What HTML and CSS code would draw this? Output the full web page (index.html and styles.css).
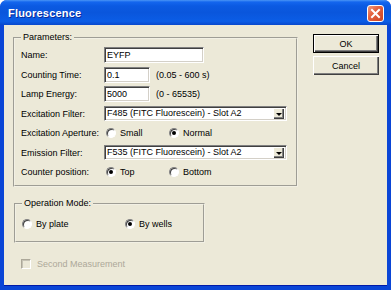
FILE: index.html
```html
<!DOCTYPE html>
<html>
<head>
<meta charset="utf-8">
<link rel="stylesheet" href="styles.css">
</head>
<body>
<div class="window">
  <div class="titlebar">
    <span class="title">Fluorescence</span>
    <span class="close"><svg width="15" height="15" viewBox="0 0 15 15"><path d="M4 4 L11 11 M11 4 L4 11" stroke="#fff" stroke-width="2" stroke-linecap="square"/></svg></span>
  </div>
  <div class="client">
    <div class="left">
      <fieldset class="group params">
        <legend>Parameters:</legend>
        <div class="row"><span class="lbl">Name:</span><span class="field w-name">EYFP</span></div>
        <div class="row"><span class="lbl">Counting Time:</span><span class="field w-num">0.1</span><span class="hint">(0.05 - 600 s)</span></div>
        <div class="row"><span class="lbl">Lamp Energy:</span><span class="field w-num">5000</span><span class="hint">(0 - 65535)</span></div>
        <div class="row"><span class="lbl">Excitation Filter:</span><span class="field combo"><span>F485 (FITC Fluorescein) - Slot A2</span><span class="dropbtn"><span class="arrow"></span></span></span></div>
        <div class="row"><span class="lbl">Excitation Aperture:</span>
          <span class="opts"><span class="opt w-a"><span class="radio"></span>Small</span><span class="opt"><span class="radio on"></span>Normal</span></span></div>
        <div class="row"><span class="lbl">Emission Filter:</span><span class="field combo"><span>F535 (FITC Fluorescein) - Slot A2</span><span class="dropbtn"><span class="arrow"></span></span></span></div>
        <div class="row"><span class="lbl">Counter position:</span>
          <span class="opts"><span class="opt w-a"><span class="radio on"></span>Top</span><span class="opt"><span class="radio"></span>Bottom</span></span></div>
      </fieldset>
      <fieldset class="group mode">
        <legend>Operation Mode:</legend>
        <div class="row">
          <span class="opt w-b"><span class="radio"></span>By plate</span>
          <span class="opt"><span class="radio on"></span>By wells</span>
        </div>
      </fieldset>
      <div class="row check-row"><span class="checkbox"></span><span class="disabled">Second Measurement</span></div>
    </div>
    <div class="right">
      <div class="btn default">OK</div>
      <div class="btn">Cancel</div>
    </div>
  </div>
</div>
</body>
</html>
```
FILE: styles.css
```css
* { box-sizing: border-box; }
html, body { margin: 0; padding: 0; background: #fff; }
body { font-family: "Liberation Sans", Arial, sans-serif; font-size: 9px; color: #000; }

.window {
  width: 391px; height: 290px;
  display: flex; flex-direction: column;
  border-radius: 7px 7px 0 0; overflow: hidden;
  background: #0A45D6;
}
.titlebar {
  height: 25px; flex: none;
  display: flex; align-items: center; justify-content: space-between;
  padding: 1px 7px 0 8px;
  background: linear-gradient(#4A95F5 0, #1466EE 2px, #0B5AE2 6px, #0A56DC 50%, #0B5DE6 85%, #0848CC 100%);
}
.title { color: #fff; font-weight: bold; font-size: 11px; text-shadow: 1px 1px #0A2A9A; letter-spacing: 0.2px; }
.close {
  width: 17px; height: 17px;
  display: flex; align-items: center; justify-content: center;
  border: 1px solid #fff; border-radius: 3px;
  background: linear-gradient(135deg, #F09B7E 0, #E4623F 40%, #CC4322 100%);
}

.client {
  flex: 1;
  margin: 0 4px 4px 4px;
  background: #ECE9D8;
  display: flex;
  padding: 7px 8px 0 9px;
  border-bottom: 1px solid #0019A8;
}
.left { width: 285px; }
.right { margin-left: auto; width: 66px; padding-top: 2px; }

.group {
  margin: 0; min-width: 0;
  border: 2px groove #F2F0E4;
}
.group legend { padding: 0 2px; line-height: 11px; }
.params { width: 285px; padding: 4px 8px 5px 6px; }
.mode { width: 191px; margin: 11px 0 0 1px; padding: 7px 6px 9px 6px; }

.row { display: flex; align-items: center; height: 16px; margin-bottom: 3.5px; white-space: nowrap; }
.row:last-child { margin-bottom: 0; }
.mode .row { margin-bottom: 0; }
.lbl { width: 83px; flex: none; }

.field {
  height: 16px; background: #fff;
  border: 1px solid; border-color: #808080 #fff #fff #808080;
  box-shadow: inset 1px 1px #404040, inset -1px -1px #D4D0C8;
  padding: 0 2px; line-height: 14px;
}
.w-name { width: 100px; }
.w-num { width: 46px; }
.hint { margin-left: 6px; }
.combo {
  width: 183px; height: 15px;
  display: flex; align-items: center; justify-content: space-between;
  padding: 0 2px 0 2px; line-height: 13px;
}
.dropbtn {
  width: 11px; height: 11px;
  display: flex; align-items: center; justify-content: center;
  background: #ECE9D8;
  box-shadow: inset 1px 1px #fff, inset -1px -1px #404040, inset -2px -2px #808080;
}
.arrow { width: 0; height: 0; border-top: 3px solid #000; border-left: 3px solid transparent; border-right: 3px solid transparent; margin-top: 1px; }

.opts { display: flex; padding-left: 2px; }
.opt { display: flex; align-items: center; gap: 4px; }
.w-a { width: 63px; }
.w-b { width: 103px; }
.radio {
  width: 10px; height: 10px; flex: none;
  border-radius: 50%; background: #fff;
  border: 1px solid; border-color: #808080 #fff #fff #808080;
  box-shadow: inset 1px 1px #404040;
  display: flex; align-items: center; justify-content: center;
}
.radio.on::after { content: ""; width: 4px; height: 4px; border-radius: 50%; background: #000; }

.check-row { margin-top: 13px; padding-left: 8px; }
.checkbox {
  width: 10px; height: 10px; flex: none;
  border: 1px solid; border-color: #ACA899 #fff #fff #ACA899;
  box-shadow: inset 1px 1px #C6C3B5;
  background: #ECE9D8;
  margin-right: 6px;
}
.disabled { color: #ACA899; }

.btn {
  height: 19px;
  display: flex; align-items: center; justify-content: center;
  background: #ECE9D8;
  box-shadow: inset 1px 1px #fff, inset -1px -1px #404040, inset -2px -2px #808080;
  margin-bottom: 3px;
}
.btn.default {
  border: 1px solid #000;
  box-shadow: inset 1px 1px #fff, inset -1px -1px #404040, inset -2px -2px #808080;
}
```
